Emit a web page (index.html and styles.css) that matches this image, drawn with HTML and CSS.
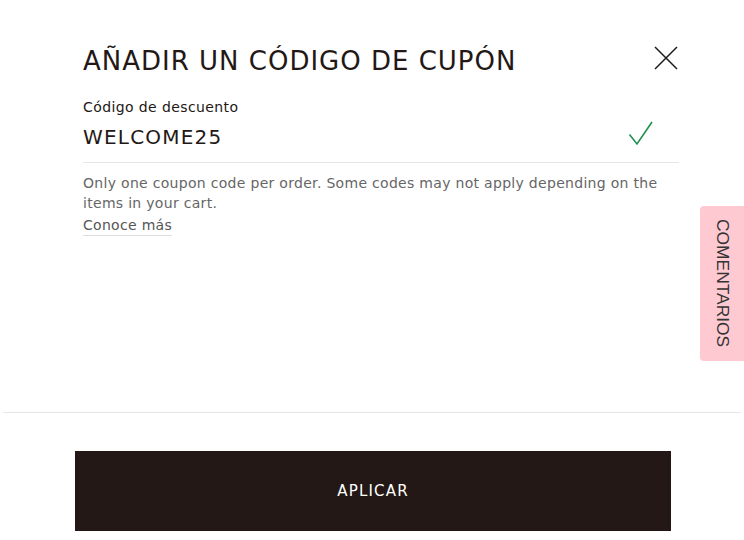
FILE: index.html
```html
<!DOCTYPE html>
<html lang="es">
<head>
<meta charset="utf-8">
<title>Añadir un código de cupón</title>
<link rel="stylesheet" href="styles.css">
</head>
<body>
<div class="sheet">
  <div class="body">
    <header class="head">
      <h1 class="title">AÑADIR UN CÓDIGO DE CUPÓN</h1>
      <button class="close" aria-label="Cerrar">
        <svg width="24" height="24" viewBox="0 0 24 24"><path d="M1 1L23 23M23 1L1 23" stroke="#1a1a1a" stroke-width="1.5" fill="none"/></svg>
      </button>
    </header>
    <div class="field">
      <label class="label">Código de descuento</label>
      <div class="input-row">
        <span class="value">WELCOME25</span>
        <svg class="check" width="26" height="26" viewBox="0 0 26 26"><path d="M1.5 13.5L9 23L24 1" stroke="#1f8f4e" stroke-width="1.6" fill="none"/></svg>
      </div>
    </div>
    <p class="help">Only one coupon code per order. Some codes may not apply depending on the items in your cart.</p>
    <a class="more" href="#">Conoce más</a>
  </div>
  <footer class="foot">
    <button class="apply">APLICAR</button>
  </footer>
</div>
<div class="feedback">COMENTARIOS</div>
</body>
</html>
```
FILE: styles.css
```css
html, body {
  margin: 0;
  padding: 0;
  background: #fff;
}
body {
  width: 744px;
  height: 540px;
  overflow: hidden;
  position: relative;
  font-family: "DejaVu Sans", "Liberation Sans", sans-serif;
  color: #231815;
}
.sheet {
  display: flex;
  flex-direction: column;
}
.body {
  height: 413px;
  box-sizing: border-box;
  margin: 0 3px;
  padding: 40px 62px 0 80px;
  border-bottom: 1px solid #e6e6e6;
}
.head {
  display: flex;
  justify-content: space-between;
  align-items: flex-start;
}
.title {
  margin: 6px 0 0;
  font-size: 26px;
  font-weight: normal;
  letter-spacing: 1px;
  line-height: 30px;
}
.close {
  border: 0;
  background: none;
  padding: 0;
  margin: 6px 1px 0 0;
  width: 24px;
  height: 24px;
  cursor: pointer;
}
.close svg { display: block; }
.field {
  margin-top: 22px;
}
.label {
  display: block;
  font-size: 14px;
  letter-spacing: 0.4px;
  line-height: 18px;
}
.input-row {
  display: flex;
  justify-content: space-between;
  align-items: center;
  height: 42px;
  border-bottom: 1px solid #e6e6e6;
  padding-bottom: 4px;
}
.value {
  font-size: 20px;
  letter-spacing: 1.2px;
}
.check {
  margin-right: 25px;
  margin-top: -6px;
}
.help {
  margin: 10px 0 0;
  font-size: 14px;
  letter-spacing: 0.3px;
  line-height: 20px;
  color: #666;
  width: 590px;
}
.more {
  display: inline-block;
  margin-top: 3px;
  font-size: 14px;
  letter-spacing: 0.3px;
  line-height: 19px;
  color: #555;
  text-decoration: none;
  border-bottom: 1px solid #ddd;
}
.foot {
  padding: 38px 0 0 75px;
}
.apply {
  display: block;
  width: 596px;
  height: 80px;
  border: 0;
  background: #231815;
  color: #fff;
  font-family: inherit;
  font-size: 15px;
  letter-spacing: 1.2px;
  cursor: pointer;
}
.feedback {
  position: absolute;
  right: 0;
  top: 206px;
  width: 44px;
  height: 155px;
  box-sizing: border-box;
  background: #ffc9d2;
  border-radius: 4px 0 0 4px;
  writing-mode: vertical-rl;
  display: flex;
  align-items: center;
  justify-content: center;
  font-family: "Liberation Sans", Arial, sans-serif;
  font-size: 17.4px;
  color: #333;
}
```
